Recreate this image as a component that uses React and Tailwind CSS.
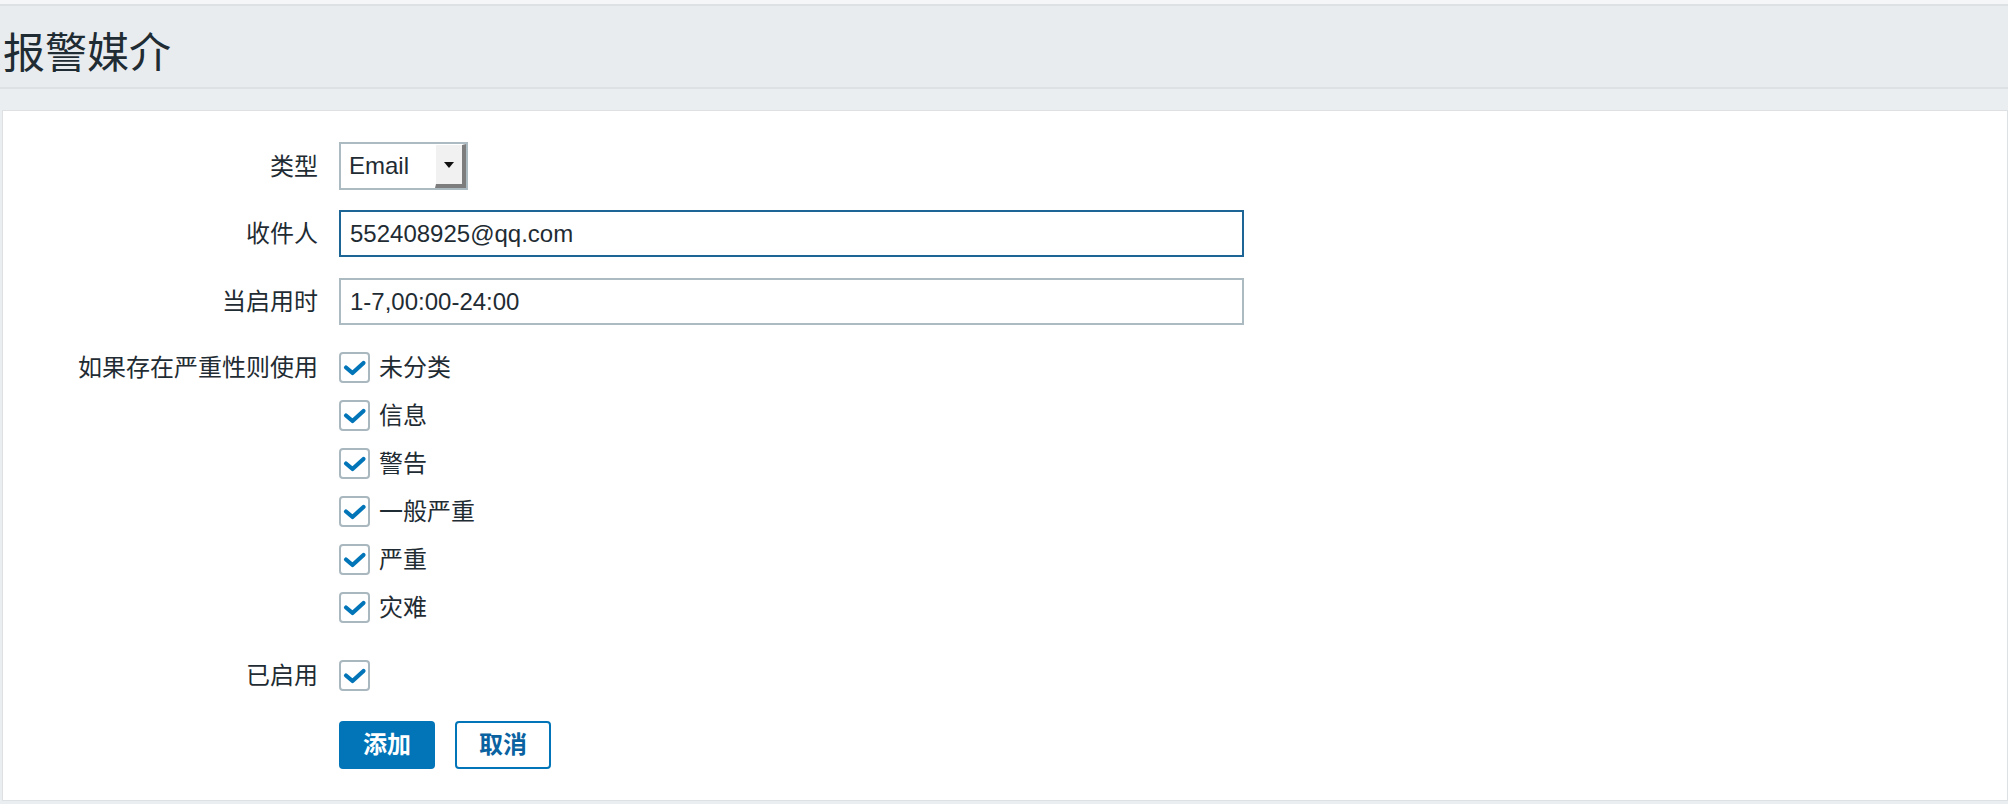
import React from "react";

const FONT = { fontFamily: '"Liberation Sans", "Noto Sans CJK SC", Arial, sans-serif' };

function Check() {
  return (
    <div className="w-[31px] h-[31px] border-2 border-[#a9b7bf] rounded-[4px] bg-white flex items-center justify-center shrink-0">
      <svg width="31" height="31" viewBox="0 0 31 31" className="-m-[2px]">
        <polyline points="7,15.5 13.5,21 24.5,11" fill="none" stroke="#0275b8" strokeWidth="4.2" strokeLinecap="round" strokeLinejoin="round" />
      </svg>
    </div>
  );
}

function Label({ children, className = "" }) {
  return (
    <div className={"w-[315px] shrink-0 text-right text-[24px] leading-[31px] text-[#1f2c33] " + className}>
      {children}
    </div>
  );
}

export default function App() {
  const severities = ["未分类", "信息", "警告", "一般严重", "严重", "灾难"];
  return (
    <div className="w-[2008px] h-[804px] bg-[#ebeef0] flex flex-col overflow-hidden" style={FONT}>
      <div className="h-[4px] bg-[#f5f6f7] shrink-0" />
      <div className="h-[85px] shrink-0 border-y-2 border-[#dde1e4] bg-[#e9ecef] pl-[3px] pt-[27px]">
        <h1 className="text-[42px] leading-[42px] font-normal text-[#1f2c33]">报警媒介</h1>
      </div>
      <div className="mt-[21px] ml-[2px] h-[691px] shrink-0 border border-[#dde1e4] bg-white pt-[31px] flex flex-col">
        {/* 类型 */}
        <div className="flex items-center">
          <Label>类型</Label>
          <div className="ml-[21px] w-[129px] h-[48px] border-2 border-[#acbbc2] bg-white flex">
            <div className="flex-1 pl-[8px] flex items-center text-[24px] text-[#1f2c33]">Email</div>
            <div className="w-[31px] h-full bg-[#f1f1f1] border-r-[4px] border-b-[4px] border-[#7d7d7d] border-l border-t border-l-[#ffffff] border-t-[#ffffff] flex items-center justify-center">
              <svg width="10" height="6" viewBox="0 0 10 6">
                <polygon points="0,0 10,0 5,6" fill="#111" />
              </svg>
            </div>
          </div>
        </div>
        {/* 收件人 */}
        <div className="flex items-center mt-[20px]">
          <Label>收件人</Label>
          <div className="ml-[21px] w-[905px] h-[47px] border-2 border-[#1d6595] bg-white pl-[9px] flex items-center text-[24px] text-[#1f2c33]">
            552408925@qq.com
          </div>
        </div>
        {/* 当启用时 */}
        <div className="flex items-center mt-[21px]">
          <Label>当启用时</Label>
          <div className="ml-[21px] w-[905px] h-[47px] border-2 border-[#acbbc2] bg-white pl-[9px] flex items-center text-[24px] text-[#1f2c33]">
            1-7,00:00-24:00
          </div>
        </div>
        {/* severities */}
        <div className="flex items-start mt-[27px]">
          <Label>如果存在严重性则使用</Label>
          <div className="ml-[21px] flex flex-col gap-[17px]">
            {severities.map((s) => (
              <div key={s} className="flex items-center h-[31px]">
                <Check />
                <span className="ml-[9px] text-[24px] leading-[31px] text-[#1f2c33]">{s}</span>
              </div>
            ))}
          </div>
        </div>
        {/* 已启用 */}
        <div className="flex items-center mt-[37px]">
          <Label>已启用</Label>
          <div className="ml-[21px]">
            <Check />
          </div>
        </div>
        {/* buttons */}
        <div className="flex items-center mt-[30px] pl-[336px] gap-[20px]">
          <button className="w-[96px] h-[48px] rounded-[4px] bg-[#0275b8] text-white text-[24px] font-bold">添加</button>
          <button className="w-[96px] h-[48px] rounded-[4px] border-2 border-[#0275b8] bg-white text-[#0a62a0] text-[24px] font-semibold">取消</button>
        </div>
      </div>
    </div>
  );
}
